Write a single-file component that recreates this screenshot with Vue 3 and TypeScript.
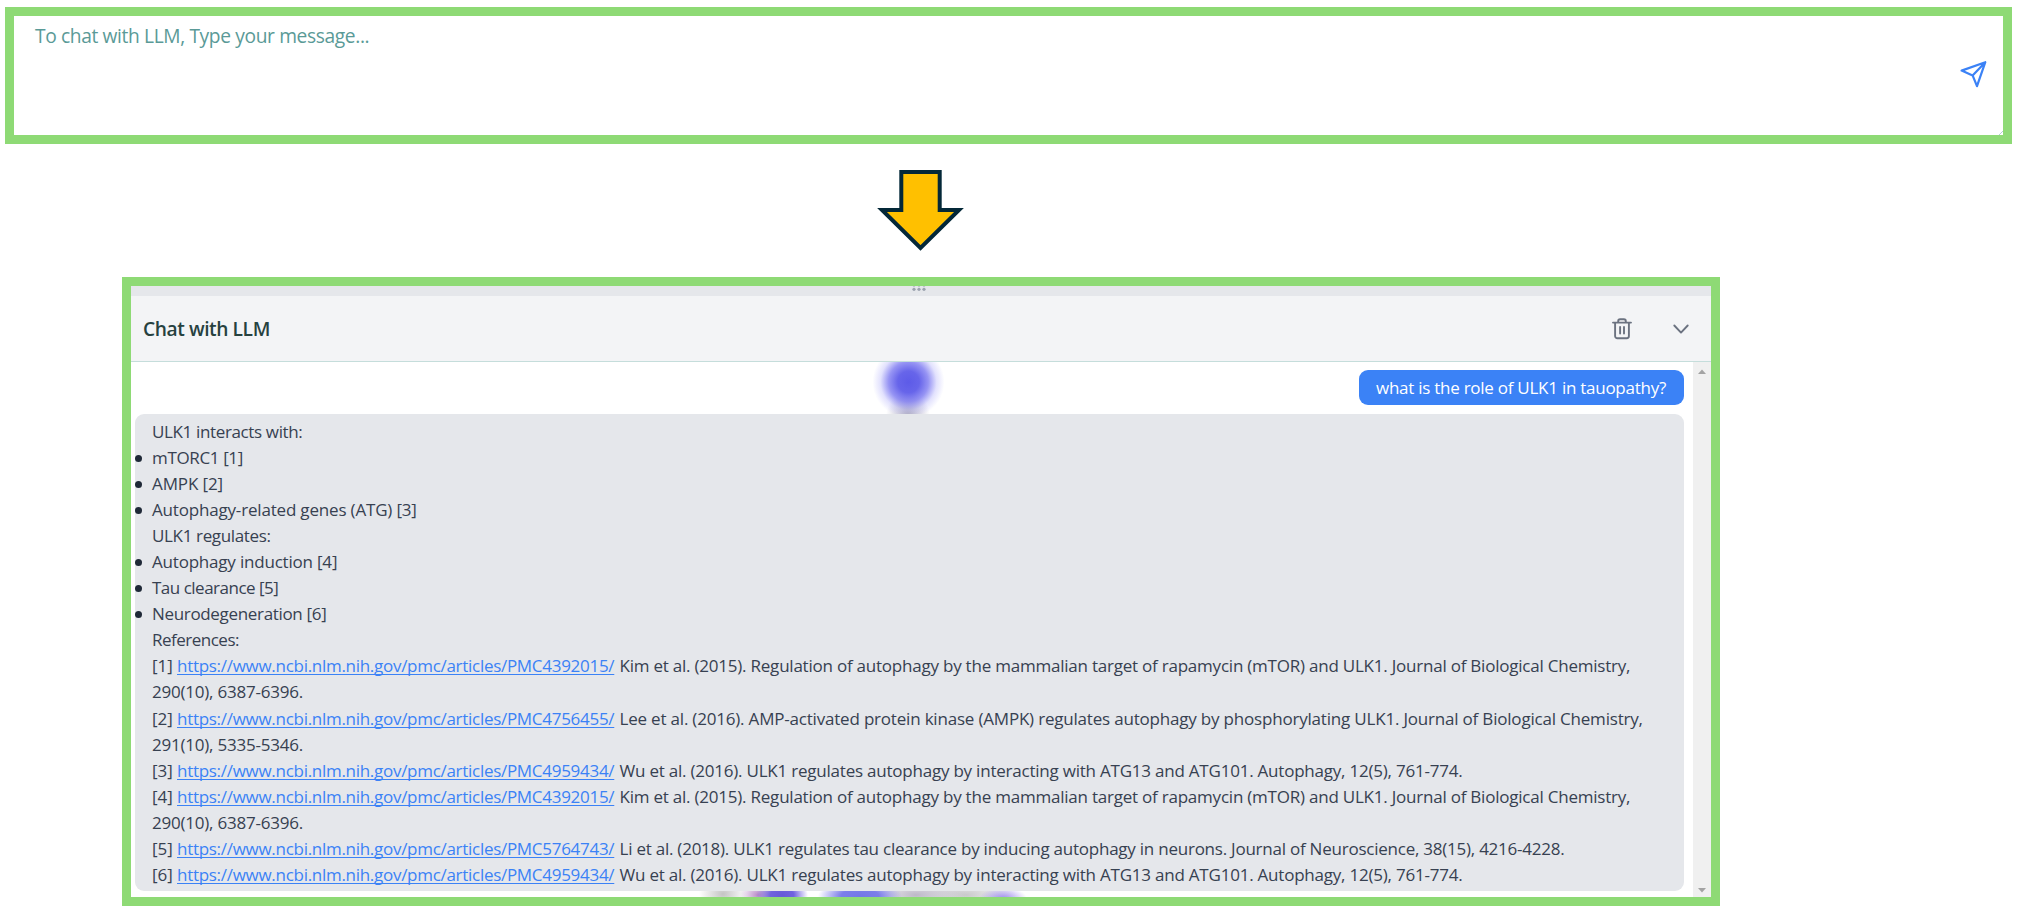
<script setup lang="ts">
interface Line {
  kind: 'text' | 'item' | 'ref'
  text: string
  spacing: number
  label?: string
  article?: string
}

const articleBase = 'https://www.ncbi.nlm.nih.gov/pmc/articles/'
const kim = 'Kim et al. (2015). Regulation of autophagy by the mammalian target of rapamycin (mTOR) and ULK1. Journal of Biological Chemistry,'
const wu = 'Wu et al. (2016). ULK1 regulates autophagy by interacting with ATG13 and ATG101. Autophagy, 12(5), 761-774.'

const lines: Line[] = [
  { kind: 'text', spacing: -0.36, text: 'ULK1 interacts with:' },
  { kind: 'item', spacing: -0.36, text: 'mTORC1 [1]' },
  { kind: 'item', spacing: -0.12, text: 'AMPK [2]' },
  { kind: 'item', spacing: -0.18, text: 'Autophagy-related genes (ATG) [3]' },
  { kind: 'text', spacing: -0.35, text: 'ULK1 regulates:' },
  { kind: 'item', spacing: -0.2, text: 'Autophagy induction [4]' },
  { kind: 'item', spacing: -0.5, text: 'Tau clearance [5]' },
  { kind: 'item', spacing: -0.33, text: 'Neurodegeneration [6]' },
  { kind: 'text', spacing: -0.5, text: 'References:' },
  { kind: 'ref', spacing: -0.224, label: '[1]', article: 'PMC4392015/', text: kim },
  { kind: 'text', spacing: -0.22, text: '290(10), 6387-6396.' },
  { kind: 'ref', spacing: -0.196, label: '[2]', article: 'PMC4756455/', text: 'Lee et al. (2016). AMP-activated protein kinase (AMPK) regulates autophagy by phosphorylating ULK1. Journal of Biological Chemistry,' },
  { kind: 'text', spacing: -0.22, text: '291(10), 5335-5346.' },
  { kind: 'ref', spacing: -0.22, label: '[3]', article: 'PMC4959434/', text: wu },
  { kind: 'ref', spacing: -0.224, label: '[4]', article: 'PMC4392015/', text: kim },
  { kind: 'text', spacing: -0.22, text: '290(10), 6387-6396.' },
  { kind: 'ref', spacing: -0.235, label: '[5]', article: 'PMC5764743/', text: 'Li et al. (2018). ULK1 regulates tau clearance by inducing autophagy in neurons. Journal of Neuroscience, 38(15), 4216-4228.' },
  { kind: 'ref', spacing: -0.22, label: '[6]', article: 'PMC4959434/', text: wu },
]
</script>

<template>
  <main class="page">
    <section class="composer">
      <span class="placeholder">To chat with LLM, Type your message...</span>
      <svg class="send" viewBox="0 0 30 30" width="30" height="30">
        <path d="M27.3 4.2 3.6 12.6 14.6 17.4 19 28.2Z M27.3 4.2 14.6 17.4" />
      </svg>
      <svg class="grip" viewBox="0 0 4 4" width="4" height="4"><path d="M0 4 4 0" /></svg>
    </section>

    <svg class="arrow" viewBox="0 0 90 84" width="90" height="84">
      <path d="M26.3 5H64.7V43H84L45.5 81 7 43H26.3Z" />
    </svg>

    <section class="panel">
      <div class="handle">
        <svg viewBox="0 0 16 10" width="16" height="10">
          <g class="faint"><circle cx="3" cy="0" r="1.2" /><circle cx="8" cy="0" r="1.2" /><circle cx="13" cy="0" r="1.2" /></g>
          <circle cx="3" cy="3.3" r="1.6" /><circle cx="8" cy="3.3" r="1.6" /><circle cx="13" cy="3.3" r="1.6" />
        </svg>
      </div>
      <header class="header">
        <h1 class="title">Chat with LLM</h1>
        <div class="actions">
          <svg viewBox="0 0 22 24" width="22" height="24">
            <path d="M2 5.600H20M4.100 5.600V19a2.200 2.200 0 0 0 2.200 2.200H15.700a2.200 2.200 0 0 0 2.200-2.200V5.600M7.200 5.600V4.200A1.900 1.900 0 0 1 9.100 2.300H12.900A1.900 1.900 0 0 1 14.800 4.200V5.600M9.100 10V16.500M13 10V16.500" />
          </svg>
          <svg viewBox="0 0 18 24" width="18" height="24"><path d="M2.300 8.500 9 15.600 15.700 8.500" /></svg>
        </div>
      </header>
      <div class="body">
        <div class="messages">
          <div class="question">what is the role of ULK1 in tauopathy?</div>
          <div class="answer">
            <div v-for="(line, i) in lines" :key="i" class="line" :class="line.kind">
              <template v-if="line.kind === 'ref'">
                <span class="label">{{ line.label }}</span>
                <a class="link">{{ articleBase + line.article }}</a>
              </template>
              <span :style="{ letterSpacing: line.spacing + 'px' }">{{ line.text }}</span>
            </div>
          </div>
        </div>
        <div class="scrollbar">
          <svg viewBox="0 0 10 6" width="10" height="6"><path d="M5 .5 9 5H1Z" /></svg>
          <svg viewBox="0 0 10 6" width="10" height="6"><path d="M5 5.500 9 1H1Z" /></svg>
        </div>
      </div>
    </section>
  </main>
</template>

<style>
body {
  background: #fff;
}
</style>

<style scoped>
.page {
  width: 2017px;
  height: 913px;
  box-sizing: border-box;
  padding: 7px 5px 0;
  overflow: hidden;
  display: flex;
  flex-direction: column;
  font-family: "Open Sans", "Noto Sans", sans-serif;
}
.composer {
  position: relative;
  box-sizing: border-box;
  width: 2007px;
  height: 137px;
  border: 9px solid #8eda75;
  display: flex;
  justify-content: space-between;
  padding: 7px 15px 0 21px;
}
.placeholder {
  font-size: 19.2px;
  line-height: 26px;
  letter-spacing: -0.37px;
  color: #5a9a97;
}
.send {
  margin-top: 34.500px;
  fill: none;
  stroke: #3b82f6;
  stroke-width: 2.2;
  stroke-linejoin: round;
  stroke-linecap: round;
}
.grip {
  position: absolute;
  right: 0;
  bottom: 0;
  stroke: #b5cbd6;
}
.arrow {
  margin: 23px 0 0 870px;
  fill: #ffc000;
  stroke: #042838;
  stroke-width: 4;
}
.panel {
  box-sizing: border-box;
  width: 1598px;
  height: 629px;
  margin: 26px 0 0 117px;
  border: 9px solid #8eda75;
  display: flex;
  flex-direction: column;
}
.handle {
  height: 10px;
  background: #e5e7eb;
  display: flex;
  padding-left: 779.500px;
  fill: #9ca3af;
}
.faint {
  opacity: 0.5;
}
.header {
  box-sizing: border-box;
  height: 66px;
  border-bottom: 1px solid #c5dddb;
  background: #f3f4f6;
  display: flex;
  align-items: center;
  justify-content: space-between;
  padding: 0 21.500px 0 12px;
}
.title {
  margin: 0;
  font-size: 19.2px;
  line-height: 28px;
  font-weight: 600;
  letter-spacing: -0.42px;
  color: #26413f;
}
.actions {
  display: flex;
  gap: 38.500px;
  fill: none;
  stroke: #6b7280;
  stroke-width: 1.9;
  stroke-linecap: round;
  stroke-linejoin: round;
}
.body {
  flex: 1;
  min-height: 0;
  display: flex;
  background:
    radial-gradient(ellipse 36px 36px at 777.500px 20px, #5d5be8 0%, #6765ea 30%, rgba(115, 112, 240, 0.75) 55%, rgba(140, 138, 248, 0.25) 78%, rgba(160, 158, 255, 0) 100%),
    radial-gradient(ellipse 22px 24px at 777px 54px, #b4b2be 0%, rgba(190, 188, 202, 0.6) 45%, rgba(200, 200, 210, 0) 100%),
    radial-gradient(ellipse 26px 16px at 651px 533px, #6659d9 0%, #7063de 45%, rgba(145, 125, 225, 0) 100%),
    radial-gradient(ellipse 18px 14px at 627px 533px, #b98ac8 0%, rgba(210, 170, 215, 0) 100%),
    radial-gradient(ellipse 42px 16px at 729px 534px, #7376e8 0%, #7c7ee9 45%, rgba(155, 155, 240, 0) 100%),
    radial-gradient(ellipse 24px 12px at 872px 537px, #9c88ee 0%, rgba(190, 180, 245, 0) 100%),
    radial-gradient(ellipse 24px 18px at 592px 532px, #c4c4c4 0%, rgba(220, 220, 220, 0) 100%),
    radial-gradient(ellipse 50px 18px at 785px 533px, #bdb8c8 0%, rgba(215, 215, 220, 0) 100%),
    radial-gradient(ellipse 50px 18px at 835px 533px, #c9c9cb 0%, rgba(220, 220, 220, 0) 100%),
    #fff;
}
.messages {
  flex: 1;
  min-width: 0;
  display: flex;
  flex-direction: column;
  align-items: flex-end;
  padding: 8px 9px 0 4px;
}
.question {
  box-sizing: border-box;
  width: 325px;
  height: 35px;
  padding-left: 17px;
  border-radius: 9px;
  background: #3b82f6;
  color: #fff;
  font-size: 17px;
  line-height: 36px;
  letter-spacing: -0.26px;
  white-space: nowrap;
}
.answer {
  box-sizing: border-box;
  width: 1549px;
  height: 477px;
  margin-top: 9px;
  padding: 5px 0 0 17px;
  border-radius: 9px;
  background: #e5e7eb;
  color: #374151;
  font-size: 17px;
  line-height: 26.060px;
}
.line {
  display: flex;
  align-items: baseline;
  height: 26.060px;
  white-space: nowrap;
}
.item {
  position: relative;
}
.item::before {
  content: "";
  position: absolute;
  left: -17px;
  top: 9.500px;
  width: 7px;
  height: 7px;
  border-radius: 50%;
  background: #1f2937;
}
.label {
  width: 25px;
}
.link {
  width: 442.500px;
  color: #3b82f6;
  letter-spacing: -0.287px;
  text-decoration: underline;
  text-decoration-thickness: 1px;
  text-underline-offset: 2px;
  text-decoration-skip-ink: none;
}
.scrollbar {
  width: 18px;
  background: #f0f0f0;
  display: flex;
  flex-direction: column;
  align-items: center;
  justify-content: space-between;
  box-sizing: border-box;
  padding: 7px 0 4px;
  fill: #a3a3a3;
}
</style>
